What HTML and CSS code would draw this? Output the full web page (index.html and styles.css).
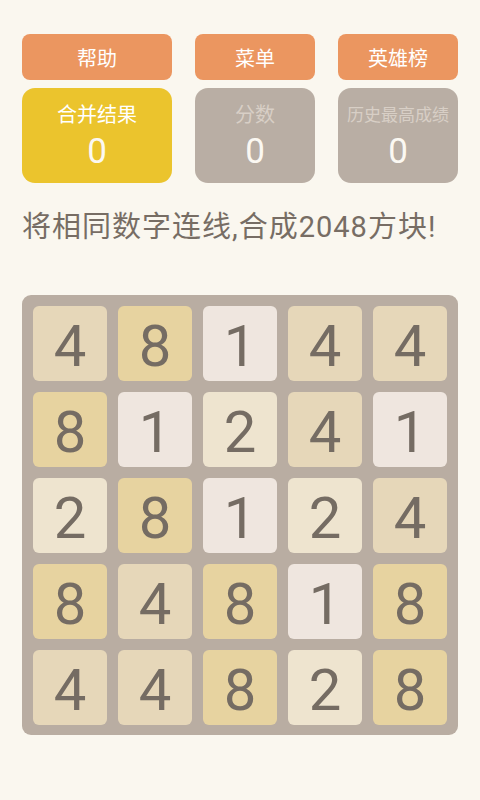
FILE: index.html
```html
<!DOCTYPE html>
<html lang="zh-cn">
<head>
  <meta charset="UTF-8" />
  <meta name="viewport" content="width=device-width, initial-scale=1" />
  <title>2048 连线</title>
  <link rel="stylesheet" href="styles.css">
</head>
<body>

  <div class="top-buttons">
    <button class="btn">帮助</button>
    <button class="btn">菜单</button>
    <button class="btn">英雄榜</button>
  </div>

  <div class="scores">
    <div class="score-box destaque">
      <div class="score-label">合并结果</div>
      <div class="score-value">0</div>
    </div>
    <div class="score-box">
      <div class="score-label">分数</div>
      <div class="score-value">0</div>
    </div>
    <div class="score-box">
      <div class="score-label small">历史最高成绩</div>
      <div class="score-value">0</div>
    </div>
  </div>

  <div class="dica">将相同数字连线,合成2048方块!</div>

  <div class="tabuleiro" id="tabuleiro"></div>

  <script>
    const valores = [
      4, 8, 1, 4, 4,
      8, 1, 2, 4, 1,
      2, 8, 1, 2, 4,
      8, 4, 8, 1, 8,
      4, 4, 8, 2, 8
    ];
    const tabuleiro = document.getElementById('tabuleiro');
    valores.forEach(v => {
      const tile = document.createElement('div');
      tile.className = 'tile t' + v;
      tile.textContent = v;
      tabuleiro.appendChild(tile);
    });
  </script>
</body>
</html>
```

FILE: styles.css
```css
* {
  box-sizing: border-box;
  margin: 0;
  padding: 0;
}

html, body {
  background: #faf7ef;
  font-family: Roboto, "Noto Sans CJK SC", sans-serif;
}

body {
  padding: 34px 22px 0 22px;
}

.top-buttons {
  display: flex;
  justify-content: space-between;
}

.btn {
  width: 120px;
  height: 46px;
  border: none;
  border-radius: 8px;
  background-color: #eb9660;
  color: #fff;
  font-family: Roboto, "Noto Sans CJK SC", sans-serif;
  font-size: 20px;
}

.btn:first-child {
  width: 150px;
}

.scores {
  display: flex;
  justify-content: space-between;
  margin-top: 8px;
}

.score-box {
  width: 120px;
  height: 95px;
  border-radius: 13px;
  background-color: #b9aea4;
  display: flex;
  flex-direction: column;
  align-items: center;
  padding-top: 12px;
  color: #fbf8f2;
}

.score-box.destaque {
  width: 150px;
  background-color: #ebc42d;
}

.score-label {
  font-size: 20px;
  line-height: 30px;
  color: #d8cfc6;
}

.score-label.small {
  font-size: 17px;
}

.destaque .score-label {
  color: #fff;
}

.score-value {
  font-size: 35px;
  line-height: 40px;
  margin-top: 2px;
}

.dica {
  margin-top: 24px;
  font-size: 29px;
  line-height: 40px;
  color: #776d64;
  letter-spacing: 1px;
}

.tabuleiro {
  margin-top: 48px;
  width: 436px;
  background: #b9ada2;
  border-radius: 9px;
  padding: 11px 10px 10px 11px;
  display: grid;
  grid-template-columns: repeat(5, 74px);
  grid-auto-rows: 75px;
  column-gap: 11px;
  row-gap: 11px;
}

.tile {
  border-radius: 6px;
  display: flex;
  align-items: center;
  justify-content: center;
  font-size: 58px;
  font-weight: 400;
  color: #756c63;
  padding-top: 4px;
}

.t1 { background: #efe6df; }
.t2 { background: #eee4cf; }
.t4 { background: #e6d7b9; }
.t8 { background: #e7d3a0; }
```
